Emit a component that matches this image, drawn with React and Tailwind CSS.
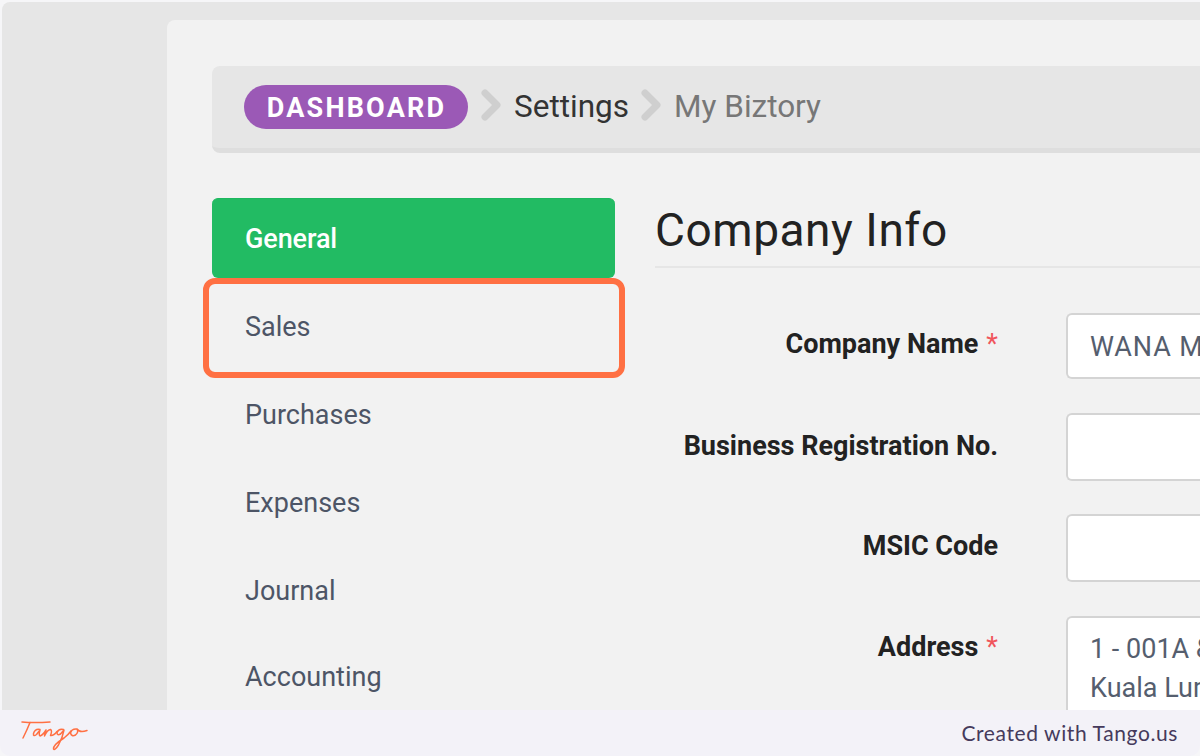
function Chevron() {
  return (
    <svg width="22" height="32" viewBox="0 0 22 32" className="mb-[4px] shrink-0">
      <polyline points="4,4 16,16 4,28" fill="none" stroke="#cfcfcf" strokeWidth="7" strokeLinejoin="round" strokeLinecap="round" />
    </svg>
  );
}

function Row({ label, req, value, h, mb, pt, pi }) {
  return (
    <div className={`flex ${mb} ${h}`}>
      <div className={`w-[342px] shrink-0 ${pt} text-right text-[27px] leading-[30px] font-bold text-[#222] whitespace-nowrap`}>
        {label}
        {req && <span className="ml-[8px] font-normal text-[#f0565c]">*</span>}
      </div>
      <div className={`ml-[68px] w-[300px] shrink-0 rounded-l-[6px] border-2 border-r-0 border-[#d4d4d4] bg-white pl-[22px] ${pi} text-[27px] leading-[39px] text-[#555e6e] whitespace-pre overflow-hidden`}>
        {value}
      </div>
    </div>
  );
}

export default function App() {
  const items = [
    ["Sales", ""],
    ["Purchases", ""],
    ["Expenses", ""],
    ["Journal", ""],
    ["Accounting", "pb-[4px]"],
    ["Tax", ""],
  ];
  return (
    <div className="relative flex h-[756px] w-[1200px] flex-col overflow-hidden bg-[#f6f6f8] font-['Roboto',sans-serif]">
      <div className="h-[710px] shrink-0 overflow-hidden pl-[2px] pt-[2px]">
        <div className="flex h-[800px] rounded-tl-[8px] bg-[#e6e6e6]">
          <div className="w-[165px] shrink-0" />
          <div className="mt-[18px] flex-1 overflow-hidden rounded-tl-[8px] bg-[#f2f2f2] pl-[45px] pt-[46px]">
            <div className="flex h-[87px] items-center rounded-l-[8px] border-b-[5px] border-[#dedede] bg-[#e6e6e6] pl-[32px]">
              <span className="flex h-[44px] w-[224px] items-center justify-center rounded-full bg-[#9b59b6] pl-[1px] pt-[2px] text-[27px] font-bold tracking-[2.2px] text-white">
                DASHBOARD
              </span>
              <span className="ml-[13px] flex"><Chevron /></span>
              <span className="ml-[11px] text-[31.5px] text-[#333]">Settings</span>
              <span className="ml-[12px] flex"><Chevron /></span>
              <span className="ml-[11px] text-[31.5px] text-[#777]">My Biztory</span>
            </div>
            <div className="mt-[45px] flex">
              <div className="w-[403px] shrink-0">
                <div className="flex h-[80px] items-center rounded-[6px] border-t border-[#1db85f] bg-[#22bb63] pl-[33px] pt-[2px] text-[27px] tracking-[-0.1px] font-medium text-white">
                  General
                </div>
                <div className="flex flex-col pt-[5px]">
                  {items.map(([t, c]) => (
                    <div key={t} className={`flex h-[88px] items-center pl-[33px] text-[27px] text-[#4d5566] ${c}`}>
                      {t}
                    </div>
                  ))}
                </div>
              </div>
              <div className="ml-[41px] flex-1">
                <div className="h-[70px] -ml-[1px] border-b-2 border-[#e6e6e6] pt-[4px] text-[46px] leading-[56px] tracking-[0.55px] text-[#222] whitespace-nowrap">
                  Company Info
                </div>
                <div className="mt-[45px]">
                  <Row label="Company Name" req value={<span className="tracking-[0.9px]">WANA MAJU SDN BHD</span>} h="h-[66px]" mb="mb-[34px]" pt="pt-[16px]" pi="pt-[13px]" />
                  <Row label="Business Registration No." value="" h="h-[68px]" mb="mb-[33px]" pt="pt-[18px]" pi="pt-[11px]" />
                  <Row label="MSIC Code" value="" h="h-[68px]" mb="mb-[34px]" pt="pt-[17px]" pi="pt-[11px]" />
                  <Row label="Address" req value={"1 - 001A & 002\nKuala Lumpur"} h="h-[140px]" mb="mb-0" pt="pt-[16px]" pi="pt-[12px]" />
                </div>
              </div>
            </div>
          </div>
        </div>
      </div>

      <div className="flex h-[46px] shrink-0 items-center justify-between rounded-b-[10px] bg-[#f3f2f8] pl-[20px] pr-[22px]">
        <svg width="70" height="34" viewBox="0 0 70 34" className="mt-[4px]" fill="none" stroke="#ff7043" strokeWidth="1.5" strokeLinecap="round" strokeLinejoin="round">
          <path d="M2 4 Q14 5 30 4" />
          <path d="M10 4.5 Q7 12 3 20" />
          <path d="M20 11.5 Q15 10.5 13.5 15.5 Q13 19 16.5 16.5 L20 12 Q18.5 17 20 18 Q23 17 26 12 Q25 15 24.5 18 Q27.5 11.5 30.5 11.5 Q32.5 12.5 30.5 17.5 Q33.5 18 37 13.5" />
          <path d="M43.5 11.5 Q38.5 10.5 37 14.5 Q37 18 40.5 16 L44 12 Q42.5 20 38.5 27 Q34.5 33 33.5 31 Q33 27 44 20 Q48 17 51 13" />
          <path d="M57 11 Q51.5 10.5 50.5 15 Q51.5 19 55.5 17 Q59 14 57 11 Q59.5 15 67 12.5" />
        </svg>
        <span className="font-['Lato',sans-serif] text-[21px] tracking-[0.6px] text-[#453a5c]">Created with Tango.us</span>
      </div>

      <div className="absolute left-[203px] top-[278px] h-[100px] w-[422px] rounded-[12px] border-[6px] border-[#ff7043]" />
    </div>
  );
}
